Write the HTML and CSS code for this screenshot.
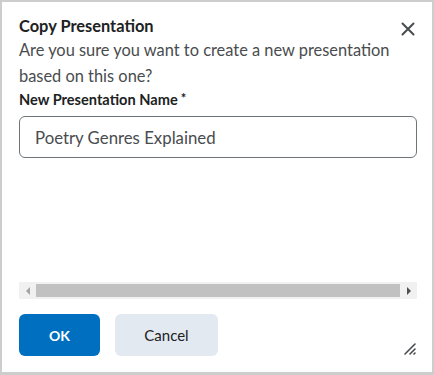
FILE: index.html
```html
<!DOCTYPE html>
<html lang="en">
<head>
<meta charset="utf-8">
<title>Copy Presentation</title>
<link rel="stylesheet" href="styles.css">
</head>
<body>
<div class="dialog">
  <div class="header">
    <h1 class="title">Copy Presentation</h1>
    <button class="close" aria-label="Close">
      <svg width="14" height="14" viewBox="0 0 14 14"><path d="M1.5 1.5L12.5 12.5M12.5 1.5L1.5 12.5" stroke="#494c4e" stroke-width="2" stroke-linecap="round"/></svg>
    </button>
  </div>
  <p class="message">Are you sure you want to create a new presentation based on this one?</p>
  <label class="label" for="name">New Presentation Name<span class="req">*</span></label>
  <input id="name" class="input" type="text" value="Poetry Genres Explained">
  <div class="spacer"></div>
  <div class="scrollbar">
    <span class="arrow left"></span>
    <span class="thumb"></span>
    <span class="arrow right"></span>
  </div>
  <div class="footer">
    <button class="btn primary">OK</button>
    <button class="btn secondary">Cancel</button>
    <svg class="grip" width="12" height="12" viewBox="0 0 12 12"><path d="M1 11L11 1M6 11L11 6M10 11L11 10" stroke="#494c4e" stroke-width="1.6" stroke-linecap="round"/></svg>
  </div>
</div>
</body>
</html>
```
FILE: styles.css
```css
html, body {
  margin: 0;
  padding: 0;
  background: #fff;
}
.dialog {
  box-sizing: border-box;
  width: 434px;
  height: 375px;
  border: 2px solid #cdcdcd;
  border-bottom-width: 3px;
  padding: 0 16px 0 17px;
  display: flex;
  flex-direction: column;
  font-family: Lato, "Liberation Sans", sans-serif;
  color: #494c4e;
}
.header {
  display: flex;
  align-items: flex-start;
  justify-content: space-between;
  padding-top: 12px;
}
.title {
  margin: 0;
  font-size: 16.4px;
  font-weight: 700;
  line-height: 24px;
  color: #202122;
}
.close {
  border: none;
  background: none;
  padding: 0;
  margin-top: 8px;
  margin-right: 1px;
  width: 14px;
  height: 14px;
  display: flex;
}
.message {
  margin: -1px 0 0 0;
  font-size: 16.4px;
  line-height: 26px;
  color: #494c4e;
}
.label {
  font-size: 14.6px;
  font-weight: 700;
  line-height: 20px;
  color: #202122;
  margin-top: 1px;
}
.req {
  margin-left: 3px;
  font-size: 13px;
  position: relative;
  top: -2px;
}
.input {
  box-sizing: border-box;
  margin-top: 6px;
  width: 398px;
  height: 42px;
  border: 1px solid #6e7477;
  border-radius: 6px;
  padding: 0 15px;
  font-family: Lato, "Liberation Sans", sans-serif;
  font-size: 16.8px;
  color: #494c4e;
  background: #fff;
}
.spacer {
  flex: 1;
}
.scrollbar {
  width: 398px;
  height: 17px;
  background: #f1f1f1;
  display: flex;
  align-items: center;
}
.arrow {
  width: 17px;
  height: 17px;
  display: flex;
  align-items: center;
  justify-content: center;
}
.arrow::before {
  content: "";
  width: 0;
  height: 0;
  border-top: 4px solid transparent;
  border-bottom: 4px solid transparent;
}
.arrow.left::before {
  border-right: 4px solid #a3a3a3;
}
.arrow.right::before {
  border-left: 4px solid #505050;
}
.thumb {
  flex: 1;
  height: 13px;
  background: #c1c1c1;
}
.footer {
  display: flex;
  align-items: center;
  gap: 15px;
  margin-top: 15px;
  margin-bottom: 16px;
}
.btn {
  height: 42px;
  border: none;
  border-radius: 6px;
  font-family: Lato, "Liberation Sans", sans-serif;
  font-size: 14px;
  font-weight: 700;
  padding: 0;
}
.primary {
  width: 81px;
  background: #006fbf;
  color: #fff;
}
.secondary {
  width: 103px;
  background: #e3e9f1;
  color: #202122;
  font-weight: 400;
  font-size: 15px;
}
.grip {
  margin-left: auto;
  align-self: flex-end;
  margin-bottom: 1px;
}
```
